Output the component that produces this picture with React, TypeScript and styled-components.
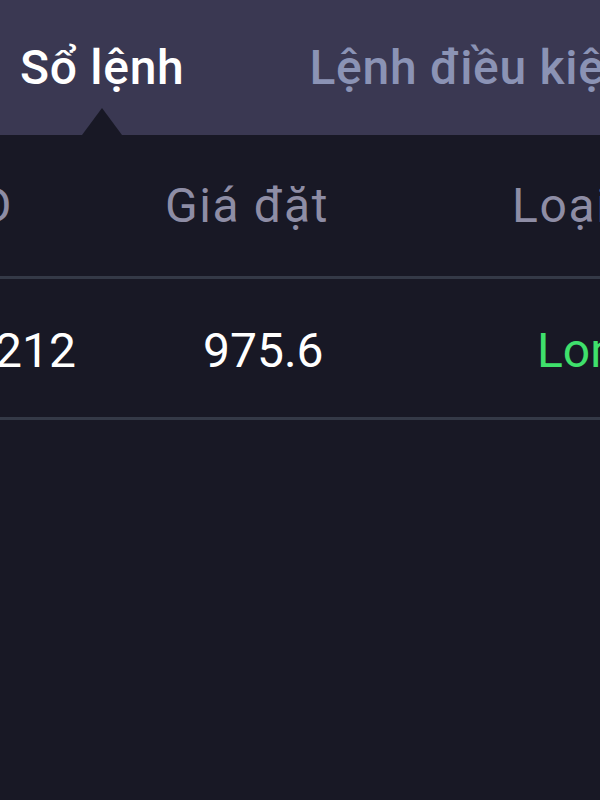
import React from "react";
import styled, {createGlobalStyle} from "styled-components";

type CellType = {
    text: string
    inset: number
    align?: "left" | "right"
    color?: string
}

const headerCells: CellType[] = [
    {text: "ID", inset: 67, align: "right"},
    {text: "Giá đặt", inset: 85},
    {text: "Loại lệnh", inset: 172},
]

const orderCells: CellType[] = [
    {text: "1212", inset: 4, align: "right"},
    {text: "975.6", inset: 123},
    {text: "Long", inset: 197, color: "#3fe06c"},
]

export default function App() {
    return (
        <>
            <GlobalStyle/>
            <StyledScreen>
                <StyledTabBar>
                    <StyledTab $active>Sổ lệnh</StyledTab>
                    <StyledTab>Lệnh điều kiện</StyledTab>
                </StyledTabBar>

                <StyledTable>
                    <StyledRow $head>
                        {headerCells.map(cell => (
                            <StyledCell key={cell.text} $inset={cell.inset} $align={cell.align} $head>
                                {cell.text}
                            </StyledCell>
                        ))}
                    </StyledRow>
                    <StyledRow>
                        {orderCells.map(cell => (
                            <StyledCell key={cell.text} $inset={cell.inset} $align={cell.align} $color={cell.color}>
                                {cell.text}
                            </StyledCell>
                        ))}
                    </StyledRow>
                </StyledTable>
            </StyledScreen>
        </>
    )
}

const GlobalStyle = createGlobalStyle`
    html, body {
        margin: 0;
        padding: 0;
        background: #181825;
    }

    body {
        font-family: Roboto, "Noto Sans", sans-serif;
    }
`

const StyledScreen = styled.div`
    width: 600px;
    height: 800px;
    overflow: hidden;
    background: #181825;
`

const StyledTabBar = styled.div`
    display: flex;
    gap: 125px;
    height: 135px;
    box-sizing: border-box;
    padding: 40px 0 0 20px;
    background: #3a3852;
    white-space: nowrap;
`

const StyledTab = styled.div<{ $active?: boolean }>`
    position: relative;
    font-size: 48px;
    line-height: 56px;
    font-weight: 500;
    letter-spacing: 0.7px;
    color: ${props => props.$active ? "#ffffff" : "#8b93b5"};

    &::after {
        content: "";
        display: ${props => props.$active ? "block" : "none"};
        position: absolute;
        left: 50%;
        top: 68px;
        margin-left: -20px;
        border-left: 20px solid transparent;
        border-right: 20px solid transparent;
        border-bottom: 27px solid #181825;
    }
`

const StyledTable = styled.div`
    margin-left: -100px;
`

const StyledRow = styled.div<{ $head?: boolean }>`
    display: grid;
    grid-template-columns: 180px 260px 1fr;
    padding: ${props => props.$head ? "43px 0 42px" : "44px 0 38px"};
    border-bottom: 3px solid #343947;
`

const StyledCell = styled.div<{ $inset: number, $align?: "left" | "right", $head?: boolean, $color?: string }>`
    font-size: 48px;
    line-height: 56px;
    white-space: nowrap;
    letter-spacing: ${props => props.$head ? 1.6 : 0}px;
    text-align: ${props => props.$align || "left"};
    padding-left: ${props => props.$align === "right" ? 0 : props.$inset}px;
    padding-right: ${props => props.$align === "right" ? props.$inset : 0}px;
    color: ${props => props.$color || (props.$head ? "#8e8da5" : "#ffffff")};
`
